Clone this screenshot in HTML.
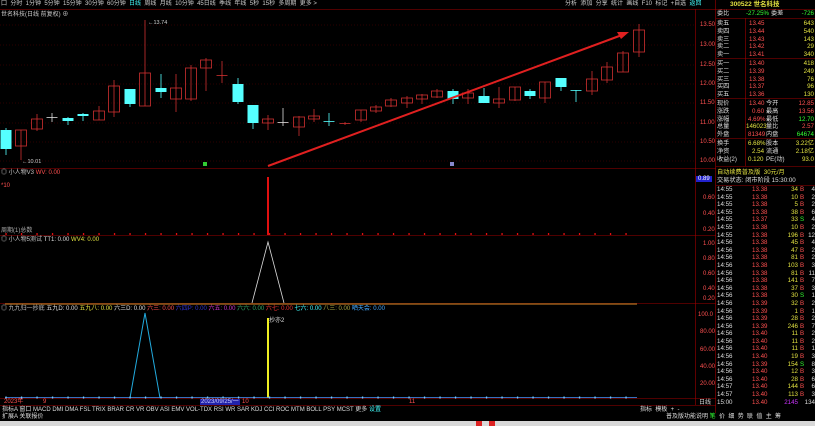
<!DOCTYPE html>
<html><head><meta charset="utf-8">
<style>
*{margin:0;padding:0;box-sizing:border-box}
body{width:815px;height:426px;background:#000;overflow:hidden;position:relative;font-family:"Liberation Sans","Noto Sans CJK SC",sans-serif;font-size:6px;color:#c0c0c0}
.a{position:absolute;white-space:nowrap;line-height:1}
.r{color:#ff5050}.g{color:#3f3}.y{color:#e0e040}.w{color:#ddd}.c{color:#4ff}
#rp{position:absolute;left:716px;top:0;width:99px;height:413px;}
.row{position:absolute;left:0;width:99px;height:8px;line-height:8px;font-size:6.2px}
.row span{position:absolute}
</style></head><body>
<!-- top toolbar -->
<div class="a" style="left:1px;top:1px;color:#ccc;font-size:6px">囗 &nbsp;分时 &nbsp;1分钟 &nbsp;5分钟 &nbsp;15分钟 &nbsp;30分钟 &nbsp;60分钟 &nbsp;<span class="c">日线</span> &nbsp;周线 &nbsp;月线 &nbsp;10分钟 &nbsp;45日线 &nbsp;季线 &nbsp;年线 &nbsp;5秒 &nbsp;15秒 &nbsp;多周期 &nbsp;更多 &gt;</div>
<div class="a" style="left:565px;top:1px;color:#ccc">分析 &nbsp;添加 &nbsp;分享 &nbsp;统计 &nbsp;画线 &nbsp;F10 &nbsp;标记 &nbsp;+自选 &nbsp;<span style="color:#4ff">返回</span></div>
<div class="a" style="left:1px;top:12px;color:#ccc">世名科技(日线 前复权) ⊕</div>
<svg class="a" style="left:0;top:0" width="716" height="413">
<g stroke="#5a0000" stroke-width="0.6">
<line x1="0" y1="9.5" x2="716" y2="9.5" stroke="#a00000"/>
<line x1="0" y1="25" x2="695" y2="25" stroke-dasharray="1 2"/><line x1="0" y1="45" x2="695" y2="45" stroke-dasharray="1 2"/><line x1="0" y1="65" x2="695" y2="65" stroke-dasharray="1 2"/><line x1="0" y1="84" x2="695" y2="84" stroke-dasharray="1 2"/><line x1="0" y1="103" x2="695" y2="103" stroke-dasharray="1 2"/><line x1="0" y1="123" x2="695" y2="123" stroke-dasharray="1 2"/><line x1="0" y1="142" x2="695" y2="142" stroke-dasharray="1 2"/><line x1="0" y1="161" x2="695" y2="161" stroke-dasharray="1 2"/>
<line x1="0" y1="168.5" x2="716" y2="168.5" stroke="#a00000"/>
<line x1="0" y1="235.5" x2="716" y2="235.5" stroke="#a00000"/>
<line x1="0" y1="303.5" x2="716" y2="303.5" stroke="#a00000"/>
<line x1="0" y1="398.5" x2="716" y2="398.5" stroke="#a00000"/>
<line x1="0" y1="405.5" x2="716" y2="405.5" stroke="#a00000"/>
<line x1="695.5" y1="9" x2="695.5" y2="405" stroke="#a00000"/>
<line x1="715.5" y1="0" x2="715.5" y2="413" stroke="#a00000"/>
</g>
<g id="k"></g>
<line x1="268" y1="166" x2="622" y2="35" stroke="#e02020" stroke-width="2"/>
<polygon points="629,32 617,32 621,39" fill="#e02020"/>
<text x="148" y="24" fill="#ccc" font-size="5.5">←13.74</text>
<text x="22" y="163" fill="#ccc" font-size="5.5">←10.01</text>
<rect x="203" y="162" width="4" height="4" fill="#3c3"/>
<rect x="450" y="162" width="4" height="4" fill="#88c"/>
<!-- sub1 -->
<rect x="267" y="177" width="2" height="58" fill="#e01010"/>
<g id="dots1" fill="#e01010"></g>
<!-- sub2 -->
<polyline points="252,303 268,242 284,303" fill="none" stroke="#ddd" stroke-width="0.8"/>
<line x1="5" y1="304" x2="637" y2="304" stroke="#b07020" stroke-width="1.2"/>
<!-- sub3 -->
<polyline points="130,398 145,313 160,398" fill="none" stroke="#2ad" stroke-width="1"/>
<rect x="267" y="318" width="2" height="80" fill="#ee2"/>
<line x1="5" y1="397.5" x2="637" y2="397.5" stroke="#49f" stroke-width="0.8"/>
<g id="dots3" fill="#7cf"></g>
</svg>
<!-- price axis labels -->
<div class="a r" style="left:700px;top:22px">13.50</div><div class="a r" style="left:700px;top:42px">13.00</div><div class="a r" style="left:700px;top:62px">12.50</div><div class="a r" style="left:700px;top:81px">12.00</div><div class="a r" style="left:700px;top:100px">11.50</div><div class="a r" style="left:700px;top:120px">11.00</div><div class="a r" style="left:700px;top:139px">10.50</div><div class="a r" style="left:700px;top:158px">10.00</div>
<div class="a" style="left:696px;top:176px;background:#22c;color:#fff;padding:0 2px">0.89</div>
<div class="a r" style="left:703px;top:195px">0.60</div><div class="a r" style="left:703px;top:211px">0.40</div><div class="a r" style="left:703px;top:227px">0.20</div>
<div class="a r" style="left:703px;top:241px">1.00</div><div class="a r" style="left:703px;top:256px">0.80</div><div class="a r" style="left:703px;top:271px">0.60</div><div class="a r" style="left:703px;top:286px">0.40</div><div class="a r" style="left:703px;top:296px">0.20</div>
<div class="a r" style="left:698px;top:312px">100.0</div><div class="a r" style="left:700px;top:329px">80.00</div><div class="a r" style="left:700px;top:347px">60.00</div><div class="a r" style="left:700px;top:364px">40.00</div><div class="a r" style="left:700px;top:381px">20.00</div>
<!-- indicator titles -->
<div class="a" style="left:1px;top:170px">◎ 小人物V3 <span class="r">WV: 0.00</span></div>
<div class="a r" style="left:1px;top:183px">*10</div>
<div class="a" style="left:1px;top:228px;color:#aaa">周期(1)总数</div>
<div class="a" style="left:1px;top:237px">◎ 小人物5测试 <span class="w">TT1: 0.00</span> <span class="y">WV4: 0.00</span></div>
<div class="a" style="left:1px;top:306px">◎ 九九归一抄底 <span class="w">五九D: 0.00</span> <span class="y">五九八: 0.00</span> <span class="w">六三D: 0.00</span> <span class="r">六三: 0.00</span> <span style="color:#33c">六四P: 0.00</span> <span style="color:#c3c">六五: 0.00</span> <span style="color:#3a6">六六: 0.00</span> <span style="color:#e33">六七: 0.00</span> <span class="c">七六: 0.00</span> <span style="color:#aa4">八三: 0.00</span> <span style="color:#4af">晒天会: 0.00</span></div>
<div class="a w" style="left:269px;top:318px">抄亦2</div>
<!-- date bar -->
<div class="a r" style="left:4px;top:399px">2023年</div><div class="a r" style="left:43px;top:399px">9</div>
<div class="a" style="left:200px;top:399px;background:#22a;color:#ccf;padding:0 1px">2023/09/25/一</div>
<div class="a r" style="left:242px;top:399px">10</div><div class="a r" style="left:409px;top:399px">11</div>
<div class="a w" style="left:699px;top:400px">日线</div>
<!-- tab bar -->
<div class="a w" style="left:2px;top:407px">指标A 窗口 MACD DMI DMA FSL TRIX BRAR CR VR OBV ASI EMV VOL-TDX RSI WR SAR KDJ CCI ROC MTM BOLL PSY MCST 更多 <span class="c">设置</span></div>
<div class="a w" style="left:640px;top:407px">指标 &nbsp;模板 &nbsp;+ &nbsp;-</div>
<div class="a w" style="left:2px;top:414px">扩展A 关联报价</div>
<div class="a w" style="left:666px;top:414px">普及版功能说明 <span class="g">笔</span> &nbsp;价 &nbsp;细 &nbsp;势 &nbsp;联 &nbsp;值 &nbsp;主 &nbsp;筹</div>
<div class="a" style="left:0;top:421px;width:815px;height:5px;background:#d8d8d8"></div>
<div class="a" style="left:476px;top:421px;width:6px;height:5px;background:#d22"></div><div class="a" style="left:489px;top:421px;width:6px;height:5px;background:#d22"></div>
<!-- right panel -->
<div id="rp">
<div class="a y" style="left:14px;top:2px;font-size:6.5px;font-weight:bold">300522 世名科技</div>
<div class="row" style="top:10px"><span class="w" style="left:1px">委比</span><span class="g" style="left:30px">-27.25%</span><span class="w" style="left:55px">委差</span><span class="g" style="right:1px">-726</span></div>
</div>
<script>
var K=[[6,130,149,128,155,0],[21,130,146,130,160,1],[37,119,129,114,131,1],[52,117,117,113,122,2],[68,118,121,117,125,0],[83,114,116,113,121,0],[99,111,120,106,120,1],[114,86,112,80,117,1],[130,89,104,89,107,0],[145,73,106,20,106,1],[161,88,92,74,98,0],[176,88,99,74,112,1],[191,68,99,65,101,1],[206,60,68,58,91,1],[222,75,75,61,83,1],[238,84,102,78,104,0],[253,105,123,105,129,0],[268,119,123,115,130,1],[283,122,122,108,126,2],[299,117,127,116,136,1],[314,116,119,109,122,1],[329,121,121,113,126,0],[345,123,123,122,125,1],[361,110,120,110,122,1],[376,107,111,105,113,1],[391,100,106,98,107,1],[407,98,103,96,108,1],[422,95,99,94,104,1],[437,91,97,89,98,1],[453,91,99,89,104,0],[468,93,98,89,104,1],[484,96,103,88,103,0],[499,99,103,87,108,1],[515,87,100,87,101,1],[530,91,96,89,99,0],[545,82,98,82,103,1],[561,78,87,78,91,0],[576,90,90,90,102,0],[592,79,91,71,95,1],[607,67,80,62,83,1],[623,53,72,51,72,1],[639,30,52,24,57,1]];
var s='';K.forEach(function(k){var x=k[0],c=k[5]==0?'#5ff':(k[5]==1?'#d03030':'#ddd');s+='<line x1="'+x+'" y1="'+k[3]+'" x2="'+x+'" y2="'+k[4]+'" stroke="'+c+'" stroke-width="0.8"/>';var h=Math.max(k[2]-k[1],0.8);if(k[5]==1&&h>1)s+='<rect x="'+(x-5.5)+'" y="'+k[1]+'" width="11" height="'+h+'" fill="none" stroke="'+c+'" stroke-width="0.8"/>';else s+='<rect x="'+(x-5.5)+'" y="'+k[1]+'" width="11" height="'+h+'" fill="'+c+'"/>';});
document.getElementById('k').innerHTML=s;
var d='',e='';for(var x=6;x<640;x+=15.5){d+='<rect x="'+(x-0.6)+'" y="233" width="1.3" height="2"/>';e+='<rect x="'+(x-0.6)+'" y="396.5" width="1.3" height="2"/>';}
document.getElementById('dots1').innerHTML=d;document.getElementById('dots3').innerHTML=e;
</script>
<div style="position:absolute;left:716px;top:0;width:99px;height:413px;font-size:6.2px">
<div class="row" style="top:20px"><span class="w" style="left:1px">卖五</span><span class="r" style="left:33px">13.45</span><span class="y" style="right:1px">643</span></div>
<div class="row" style="top:28px"><span class="w" style="left:1px">卖四</span><span class="r" style="left:33px">13.44</span><span class="y" style="right:1px">540</span></div>
<div class="row" style="top:36px"><span class="w" style="left:1px">卖三</span><span class="r" style="left:33px">13.43</span><span class="y" style="right:1px">143</span></div>
<div class="row" style="top:43px"><span class="w" style="left:1px">卖二</span><span class="r" style="left:33px">13.42</span><span class="y" style="right:1px">29</span></div>
<div class="row" style="top:51px"><span class="w" style="left:1px">卖一</span><span class="r" style="left:33px">13.41</span><span class="y" style="right:1px">340</span></div>
<div class="row" style="top:60px"><span class="w" style="left:1px">买一</span><span class="r" style="left:33px">13.40</span><span class="y" style="right:1px">418</span></div>
<div class="row" style="top:68px"><span class="w" style="left:1px">买二</span><span class="r" style="left:33px">13.39</span><span class="y" style="right:1px">249</span></div>
<div class="row" style="top:76px"><span class="w" style="left:1px">买三</span><span class="r" style="left:33px">13.38</span><span class="y" style="right:1px">76</span></div>
<div class="row" style="top:83px"><span class="w" style="left:1px">买四</span><span class="r" style="left:33px">13.37</span><span class="y" style="right:1px">96</span></div>
<div class="row" style="top:91px"><span class="w" style="left:1px">买五</span><span class="r" style="left:33px">13.36</span><span class="y" style="right:1px">130</span></div>
<div class="row" style="top:100px"><span class="w" style="left:1px">现价</span><span class="r" style="left:33px">13.40</span><span class="w" style="left:50px">今开</span><span class="r" style="right:1px">12.85</span></div>
<div class="row" style="top:108px"><span class="w" style="left:1px">涨跌</span><span class="r" style="left:36px">0.60</span><span class="w" style="left:50px">最高</span><span class="r" style="right:1px">13.56</span></div>
<div class="row" style="top:116px"><span class="w" style="left:1px">涨幅</span><span class="r" style="left:32px">4.69%</span><span class="w" style="left:50px">最低</span><span class="g" style="right:1px">12.70</span></div>
<div class="row" style="top:123px"><span class="w" style="left:1px">总量</span><span class="y" style="left:30px">146023</span><span class="w" style="left:50px">量比</span><span class="r" style="right:1px">2.57</span></div>
<div class="row" style="top:131px"><span class="w" style="left:1px">外盘</span><span class="r" style="left:32px">81349</span><span class="w" style="left:50px">内盘</span><span class="g" style="right:1px">64674</span></div>
<div class="row" style="top:140px"><span class="w" style="left:1px">换手</span><span class="y" style="left:32px">6.68%</span><span class="w" style="left:50px">股本</span><span class="y" style="right:1px">3.22亿</span></div>
<div class="row" style="top:148px"><span class="w" style="left:1px">净资</span><span class="y" style="left:36px">2.54</span><span class="w" style="left:50px">流通</span><span class="y" style="right:1px">2.18亿</span></div>
<div class="row" style="top:156px"><span class="w" style="left:1px">收益(2)</span><span class="y" style="left:32px">0.120</span><span class="w" style="left:50px">PE(动)</span><span class="y" style="right:1px">93.0</span></div>
<div class="row" style="top:169px"><span class="y" style="left:1px">自动续费普及版 &nbsp;30元/月</span></div>
<div class="row" style="top:177px"><span class="w" style="left:1px">交易状态: 闭市阶段 15:30:00</span></div>
</div>
<svg class="a" style="left:716px;top:0" width="99" height="413"><g stroke="#a00000" stroke-width="0.6"><line x1="0" y1="9.5" x2="99" y2="9.5"/><line x1="0" y1="18.5" x2="99" y2="18.5"/><line x1="0" y1="58.5" x2="99" y2="58.5"/><line x1="0" y1="98.5" x2="99" y2="98.5"/><line x1="0" y1="138.5" x2="99" y2="138.5"/><line x1="0" y1="166.5" x2="99" y2="166.5"/><line x1="0" y1="185.5" x2="99" y2="185.5"/><line x1="29.5" y1="18" x2="29.5" y2="166"/></g></svg>
<div style="position:absolute;left:716px;top:186px;width:99px;font-size:6.2px;line-height:7.6px;font-family:'Liberation Sans Narrow','Liberation Sans','Noto Sans CJK SC',sans-serif">
<div style="position:relative;height:7.6px"><span class="w" style="position:absolute;left:1px">14:55</span><span class="r" style="position:absolute;left:36px">13.38</span><span class="y" style="position:absolute;right:17px">34</span><span class="r" style="position:absolute;left:84px">B</span><span class="w" style="position:absolute;right:0">4</span></div>
<div style="position:relative;height:7.6px"><span class="w" style="position:absolute;left:1px">14:55</span><span class="r" style="position:absolute;left:36px">13.38</span><span class="y" style="position:absolute;right:17px">10</span><span class="r" style="position:absolute;left:84px">B</span><span class="w" style="position:absolute;right:0">2</span></div>
<div style="position:relative;height:7.6px"><span class="w" style="position:absolute;left:1px">14:55</span><span class="r" style="position:absolute;left:36px">13.38</span><span class="y" style="position:absolute;right:17px">5</span><span class="r" style="position:absolute;left:84px">B</span><span class="w" style="position:absolute;right:0">2</span></div>
<div style="position:relative;height:7.6px"><span class="w" style="position:absolute;left:1px">14:55</span><span class="r" style="position:absolute;left:36px">13.38</span><span class="y" style="position:absolute;right:17px">38</span><span class="r" style="position:absolute;left:84px">B</span><span class="w" style="position:absolute;right:0">6</span></div>
<div style="position:relative;height:7.6px"><span class="w" style="position:absolute;left:1px">14:55</span><span class="r" style="position:absolute;left:36px">13.37</span><span class="y" style="position:absolute;right:17px">33</span><span class="g" style="position:absolute;left:84px">S</span><span class="w" style="position:absolute;right:0">4</span></div>
<div style="position:relative;height:7.6px"><span class="w" style="position:absolute;left:1px">14:55</span><span class="r" style="position:absolute;left:36px">13.38</span><span class="y" style="position:absolute;right:17px">10</span><span class="r" style="position:absolute;left:84px">B</span><span class="w" style="position:absolute;right:0">2</span></div>
<div style="position:relative;height:7.6px"><span class="w" style="position:absolute;left:1px">14:55</span><span class="r" style="position:absolute;left:36px">13.38</span><span class="y" style="position:absolute;right:17px">196</span><span class="r" style="position:absolute;left:84px">B</span><span class="w" style="position:absolute;right:0">12</span></div>
<div style="position:relative;height:7.6px"><span class="w" style="position:absolute;left:1px">14:56</span><span class="r" style="position:absolute;left:36px">13.38</span><span class="y" style="position:absolute;right:17px">45</span><span class="r" style="position:absolute;left:84px">B</span><span class="w" style="position:absolute;right:0">4</span></div>
<div style="position:relative;height:7.6px"><span class="w" style="position:absolute;left:1px">14:56</span><span class="r" style="position:absolute;left:36px">13.38</span><span class="y" style="position:absolute;right:17px">47</span><span class="r" style="position:absolute;left:84px">B</span><span class="w" style="position:absolute;right:0">2</span></div>
<div style="position:relative;height:7.6px"><span class="w" style="position:absolute;left:1px">14:56</span><span class="r" style="position:absolute;left:36px">13.38</span><span class="y" style="position:absolute;right:17px">81</span><span class="r" style="position:absolute;left:84px">B</span><span class="w" style="position:absolute;right:0">2</span></div>
<div style="position:relative;height:7.6px"><span class="w" style="position:absolute;left:1px">14:56</span><span class="r" style="position:absolute;left:36px">13.38</span><span class="y" style="position:absolute;right:17px">103</span><span class="r" style="position:absolute;left:84px">B</span><span class="w" style="position:absolute;right:0">3</span></div>
<div style="position:relative;height:7.6px"><span class="w" style="position:absolute;left:1px">14:56</span><span class="r" style="position:absolute;left:36px">13.38</span><span class="y" style="position:absolute;right:17px">81</span><span class="r" style="position:absolute;left:84px">B</span><span class="w" style="position:absolute;right:0">11</span></div>
<div style="position:relative;height:7.6px"><span class="w" style="position:absolute;left:1px">14:56</span><span class="r" style="position:absolute;left:36px">13.38</span><span class="y" style="position:absolute;right:17px">141</span><span class="r" style="position:absolute;left:84px">B</span><span class="w" style="position:absolute;right:0">7</span></div>
<div style="position:relative;height:7.6px"><span class="w" style="position:absolute;left:1px">14:56</span><span class="r" style="position:absolute;left:36px">13.38</span><span class="y" style="position:absolute;right:17px">37</span><span class="r" style="position:absolute;left:84px">B</span><span class="w" style="position:absolute;right:0">3</span></div>
<div style="position:relative;height:7.6px"><span class="w" style="position:absolute;left:1px">14:56</span><span class="r" style="position:absolute;left:36px">13.38</span><span class="y" style="position:absolute;right:17px">30</span><span class="g" style="position:absolute;left:84px">S</span><span class="w" style="position:absolute;right:0">1</span></div>
<div style="position:relative;height:7.6px"><span class="w" style="position:absolute;left:1px">14:56</span><span class="r" style="position:absolute;left:36px">13.39</span><span class="y" style="position:absolute;right:17px">32</span><span class="r" style="position:absolute;left:84px">B</span><span class="w" style="position:absolute;right:0">2</span></div>
<div style="position:relative;height:7.6px"><span class="w" style="position:absolute;left:1px">14:56</span><span class="r" style="position:absolute;left:36px">13.39</span><span class="y" style="position:absolute;right:17px">1</span><span class="r" style="position:absolute;left:84px">B</span><span class="w" style="position:absolute;right:0">1</span></div>
<div style="position:relative;height:7.6px"><span class="w" style="position:absolute;left:1px">14:56</span><span class="r" style="position:absolute;left:36px">13.39</span><span class="y" style="position:absolute;right:17px">28</span><span class="r" style="position:absolute;left:84px">B</span><span class="w" style="position:absolute;right:0">2</span></div>
<div style="position:relative;height:7.6px"><span class="w" style="position:absolute;left:1px">14:56</span><span class="r" style="position:absolute;left:36px">13.39</span><span class="y" style="position:absolute;right:17px">246</span><span class="r" style="position:absolute;left:84px">B</span><span class="w" style="position:absolute;right:0">7</span></div>
<div style="position:relative;height:7.6px"><span class="w" style="position:absolute;left:1px">14:56</span><span class="r" style="position:absolute;left:36px">13.40</span><span class="y" style="position:absolute;right:17px">11</span><span class="r" style="position:absolute;left:84px">B</span><span class="w" style="position:absolute;right:0">2</span></div>
<div style="position:relative;height:7.6px"><span class="w" style="position:absolute;left:1px">14:56</span><span class="r" style="position:absolute;left:36px">13.40</span><span class="y" style="position:absolute;right:17px">11</span><span class="r" style="position:absolute;left:84px">B</span><span class="w" style="position:absolute;right:0">2</span></div>
<div style="position:relative;height:7.6px"><span class="w" style="position:absolute;left:1px">14:56</span><span class="r" style="position:absolute;left:36px">13.40</span><span class="y" style="position:absolute;right:17px">11</span><span class="r" style="position:absolute;left:84px">B</span><span class="w" style="position:absolute;right:0">1</span></div>
<div style="position:relative;height:7.6px"><span class="w" style="position:absolute;left:1px">14:56</span><span class="r" style="position:absolute;left:36px">13.40</span><span class="y" style="position:absolute;right:17px">19</span><span class="r" style="position:absolute;left:84px">B</span><span class="w" style="position:absolute;right:0">3</span></div>
<div style="position:relative;height:7.6px"><span class="w" style="position:absolute;left:1px">14:56</span><span class="r" style="position:absolute;left:36px">13.39</span><span class="y" style="position:absolute;right:17px">154</span><span class="g" style="position:absolute;left:84px">S</span><span class="w" style="position:absolute;right:0">8</span></div>
<div style="position:relative;height:7.6px"><span class="w" style="position:absolute;left:1px">14:56</span><span class="r" style="position:absolute;left:36px">13.40</span><span class="y" style="position:absolute;right:17px">12</span><span class="r" style="position:absolute;left:84px">B</span><span class="w" style="position:absolute;right:0">3</span></div>
<div style="position:relative;height:7.6px"><span class="w" style="position:absolute;left:1px">14:56</span><span class="r" style="position:absolute;left:36px">13.40</span><span class="y" style="position:absolute;right:17px">28</span><span class="r" style="position:absolute;left:84px">B</span><span class="w" style="position:absolute;right:0">6</span></div>
<div style="position:relative;height:7.6px"><span class="w" style="position:absolute;left:1px">14:57</span><span class="r" style="position:absolute;left:36px">13.40</span><span class="y" style="position:absolute;right:17px">144</span><span class="r" style="position:absolute;left:84px">B</span><span class="w" style="position:absolute;right:0">6</span></div>
<div style="position:relative;height:7.6px"><span class="w" style="position:absolute;left:1px">14:57</span><span class="r" style="position:absolute;left:36px">13.40</span><span class="y" style="position:absolute;right:17px">113</span><span class="r" style="position:absolute;left:84px">B</span><span class="w" style="position:absolute;right:0">3</span></div>
<div style="position:relative;height:7.6px"><span class="w" style="position:absolute;left:1px">15:00</span><span class="r" style="position:absolute;left:36px">13.40</span><span style="position:absolute;right:17px;color:#c3f">2145</span><span class="w" style="position:absolute;right:0">134</span></div>
</div>
</body></html>
